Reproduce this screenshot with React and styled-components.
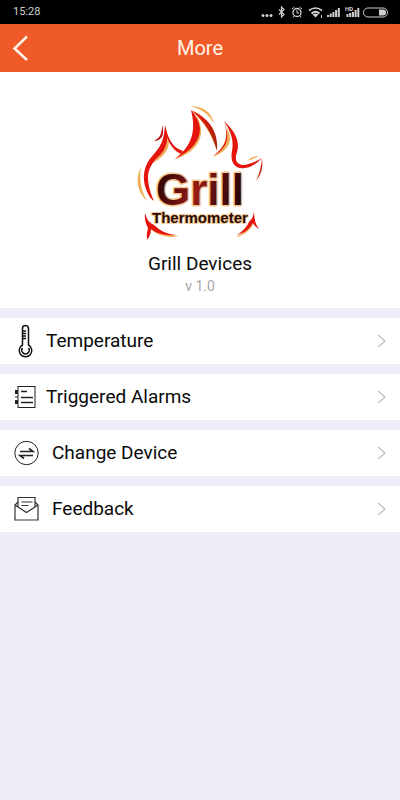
import React from "react";
import styled, { createGlobalStyle } from "styled-components";

const GlobalStyle = createGlobalStyle`
  * {
    box-sizing: border-box;
  }

  body {
    margin: 0;
    background: #efeef8;
    color: #0a0a0a;
    font-family: Roboto, "Liberation Sans", sans-serif;
  }
`;

const StatusBar = styled.div`
  display: flex;
  align-items: center;
  justify-content: space-between;
  height: 24px;
  padding: 0 11px 0 13px;
  background: #000000;
  color: #d0d0d0;
  font-size: 11px;
  line-height: 24px;
`;

const Header = styled.header`
  display: grid;
  grid-template-columns: 48px 1fr 48px;
  align-items: center;
  height: 48px;
  background: #f05a28;
`;

const Title = styled.h1`
  margin: 0;
  color: #fff4ea;
  font-size: 20px;
  font-weight: 400;
  line-height: 48px;
  text-align: center;
`;

const BackButton = styled.button`
  display: flex;
  align-items: center;
  height: 48px;
  padding: 0 0 0 12px;
  border: 0;
  background: none;
  cursor: pointer;
`;

const About = styled.section`
  display: flex;
  flex-direction: column;
  align-items: center;
  padding: 26px 0 12px;
  background: #ffffff;
`;

const AppName = styled.h2`
  margin: 6px 0 0;
  font-size: 19px;
  font-weight: 400;
  line-height: 24px;
`;

const Version = styled.p`
  margin: 0;
  color: #a8a8a8;
  font-size: 14px;
  line-height: 20px;
`;

const Menu = styled.nav`
  display: flex;
  flex-direction: column;
  gap: 10px;
  padding: 10px 0;
`;

const MenuLink = styled.a`
  display: flex;
  align-items: center;
  gap: ${({ $wide }) => ($wide ? "12px" : "8px")};
  height: 46px;
  padding: 0 13px;
  background: #ffffff;
  color: inherit;
  font-size: 19px;
  line-height: 24px;
  text-decoration: none;

  span {
    flex: 1;
  }
`;

const StatusIcons = () => (
  <svg width="128" height="16" viewBox="0 0 128 16" fill="none" stroke="#d0d0d0">
    <g fill="#d0d0d0" stroke="none">
      <circle cx="2" cy="11.500" r="1.500" />
      <circle cx="6" cy="11.500" r="1.500" />
      <circle cx="10" cy="11.500" r="1.500" />
    </g>
    <path d="M18 5.500l5 5-2.500 2.500v-10l2.500 2.500-5 5" strokeWidth="1.200" />
    <circle cx="36" cy="8.500" r="4" strokeWidth="1.300" />
    <path d="M36 6v3h2M31 5l2.500-2M41 5l-2.500-2M33 12l-1 1.500M39 12l1 1.500" />
    <path d="M48 6.500q6.500-5 13 0M50.500 9.500q4-3.500 8 0" strokeWidth="1.700" />
    <path d="M51.500 10.500q3-2 6 0l-3 3z" fill="#d0d0d0" stroke="none" />
    <path d="M60.500 11v3" />
    <g strokeWidth="2">
      <path d="M67 13v-2M69.700 13V9.500M72.400 13V8M75.100 13V6M77.800 13V4" />
      <path d="M86.500 13v-3M89.200 13V9M91.900 13V8M94.600 13V6M97.300 13V4" />
    </g>
    <text x="84" y="7" fill="#d0d0d0" stroke="none" fontSize="6" fontWeight="700">
      HD
    </text>
    <rect x="102.500" y="4" width="24" height="9" rx="4.500" />
    <path d="M118 5.500h4a3 3 0 010 6h-4z" fill="#d0d0d0" stroke="none" />
  </svg>
);

const BackIcon = () => (
  <svg width="17" height="26" viewBox="0 0 17 26" fill="none" stroke="#fff4ea" strokeWidth="2.500">
    <path d="M15 1.500L2.500 13.500 15 25" />
  </svg>
);

const ChevronIcon = () => (
  <svg width="10" height="14" viewBox="0 0 10 14" fill="none" stroke="#bcbcbc" strokeWidth="1.200">
    <path d="M1 1l7 6-7 6" />
  </svg>
);

const GrillLogo = () => (
  <svg width="140" height="148" viewBox="0 0 140 148" role="img" aria-label="Grill Thermometer">
    <defs>
      <linearGradient id="ember" gradientUnits="userSpaceOnUse" x1="28" y1="76" x2="112" y2="100">
        <stop offset="0" stopColor="#2a0505" />
        <stop offset="0.300" stopColor="#6e1010" />
        <stop offset="0.480" stopColor="#991c14" />
        <stop offset="0.650" stopColor="#641010" />
        <stop offset="1" stopColor="#260404" />
      </linearGradient>
      <linearGradient id="crest" x1="0" y1="0" x2="1" y2="1">
        <stop offset="0.200" stopColor="#e81a0c" />
        <stop offset="1" stopColor="#9c2510" />
      </linearGradient>
    </defs>
    <g fill="#f0ae58">
      <path d="M11 69C5 81 7 94 17 103C11 93 9 81 11 69z" />
      <path d="M36 32C43 47 37 57 23 65C31 56 37 48 36 32z" />
      <path d="M60 8C73 8 82 14 84 26C79 16 72 11 60 8z" />
      <path d="M67 18C76 36 71 52 44 62C60 52 68 40 67 18z" />
      <path d="M97 30C104 43 98 53 83 59C93 50 98 42 97 30z" />
      <path d="M64 15C80 26 86 36 87 53C82 40 77 27 64 15z" />
      <path d="M117 63q5-5 12-5q-6 3-12 5z" />
      <path d="M20 128Q28 136 49 138Q34 142 20 131z" />
      <path d="M123 121Q119 134 105 139Q117 138 124 125z" />
    </g>
    <g fill="#e5140c">
      <path d="M35 27C34 42 31 48 24 56C13 67 12 80 16 91Q19 100 24 103Q18 90 18 80C18 71 22 65 28 59C36 52 40 42 35 27z" />
      <path d="M35 28C38 41 43 50 53 53L51 56C42 52 36 42 35 28z" />
      <path d="M61 12C66 32 63 47 45 61C63 52 70 42 70 30Q68 19 61 12z" />
      <path d="M94 23C99 39 96 49 83 58C96 51 101 42 94 23z" />
      <path d="M94 23C106 34 110 44 107 54C104 63 107 67 115 67Q124 65 132 60Q124 69 115 70C104 72 100 63 102 53C104 42 101 34 94 23z" />
      <path d="M15 115Q17 124 24 127Q33 136 46 137Q29 138 21 131Q21 137 17 142Q16 136 18 130Q14 123 15 115z" />
      <path d="M124 113Q124 125 129 131Q125 129 123 125Q118 134 107 137Q116 131 119 124Q124 119 124 113z" />
    </g>
    <path d="M132 60Q134 74 126 83Q131 73 132 60z" fill="#c41c12" />
    <path d="M61 12C77 19 89 32 87 53C83 37 75 24 61 12z" fill="url(#crest)" />
    <path d="M32 27C35 36 32 43 24 43C30 40 32 36 32 27z" fill="#b81212" />
    <g fontFamily="Liberation Sans, sans-serif" fontWeight="700" stroke="#f3c892" paintOrder="stroke" strokeLinejoin="round">
      <text x="26" y="107" fontSize="44" strokeWidth="3" fill="url(#ember)">
        Grill
      </text>
      <text x="22" y="125" fontSize="15" strokeWidth="2" fill="#260b08">
        Thermometer
      </text>
    </g>
  </svg>
);

const ThermometerIcon = () => (
  <svg width="25" height="34" viewBox="0 0 25 34" fill="none" stroke="#111111" strokeWidth="1.500">
    <path d="M9.500 21V4.500a3 3 0 016 0V21a6.300 6.300 0 11-6 0z" />
    <path d="M10 7h3M10 9.500h3M10 12h3M10 14.500h3" />
    <path d="M9.500 24a3.700 3.700 0 106 0" />
  </svg>
);

const AlarmListIcon = () => (
  <svg width="25" height="24" viewBox="0 0 25 24" fill="none" stroke="#222222">
    <rect x="5" y="1.500" width="17" height="21" />
    <path d="M8 6.500h6M8 12.500h12M8 17.500h12" strokeWidth="1.300" />
    <path d="M2 7h3M2 17h3" strokeWidth="4" />
    <path d="M2 12h3" />
  </svg>
);

const SwapIcon = () => (
  <svg width="27" height="26" viewBox="0 0 27 26" fill="none" stroke="#222222">
    <circle cx="13.500" cy="13" r="11.700" />
    <path d="M7 11.500h13l-4-3M20 15.500H7l4 3" strokeWidth="1.600" />
  </svg>
);

const FeedbackIcon = () => (
  <svg width="27" height="26" viewBox="0 0 27 26" fill="none" stroke="#333333" strokeWidth="1.200">
    <path d="M5 6L2 9v15h23V9l-3-3" />
    <path d="M2 9l11.500 7.500L25 9" />
    <path d="M5 11V1.500h17V11" />
    <path d="M8.500 6h11M8.500 9.500h7" />
  </svg>
);

const items = [
  { label: "Temperature", icon: ThermometerIcon },
  { label: "Triggered Alarms", icon: AlarmListIcon },
  { label: "Change Device", icon: SwapIcon, wide: true },
  { label: "Feedback", icon: FeedbackIcon, wide: true },
];

const App = () => {
  return (
    <>
      <GlobalStyle />
      <StatusBar>
        <time>15:28</time>
        <StatusIcons />
      </StatusBar>
      <Header>
        <BackButton type="button" aria-label="Back">
          <BackIcon />
        </BackButton>
        <Title>More</Title>
      </Header>
      <main>
        <About>
          <GrillLogo />
          <AppName>Grill Devices</AppName>
          <Version>v 1.0</Version>
        </About>
        <Menu>
          {items.map(({ label, icon: Icon, wide }) => (
            <MenuLink key={label} href="#" $wide={wide}>
              <Icon />
              <span>{label}</span>
              <ChevronIcon />
            </MenuLink>
          ))}
        </Menu>
      </main>
    </>
  );
};

export default App;
